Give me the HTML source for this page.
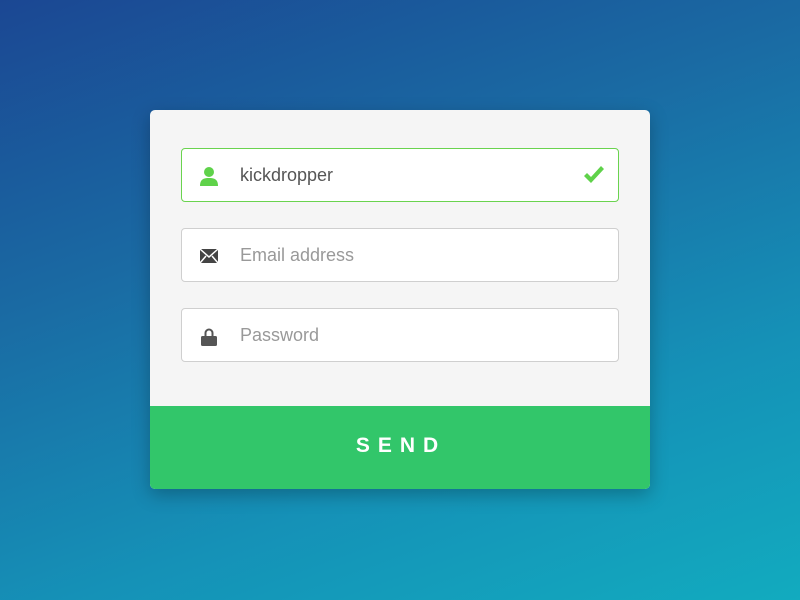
<!DOCTYPE html>
<html><head><style>
body{margin:0;width:800px;height:600px;overflow:hidden;background:linear-gradient(160deg,#1b4793 0%,#1a6aa3 35%,#1591b7 70%,#12abbf 100%);font-family:"Liberation Sans",sans-serif;position:relative}
.card{position:absolute;left:150px;top:110px;width:500px;height:379px;background:#f5f5f5;border-radius:5px;overflow:hidden;box-shadow:0 6px 18px rgba(0,0,0,.25)}
.in{position:absolute;left:31px;width:436px;height:52px;background:#fff;border:1px solid #cfcfcf;border-radius:4px}
.in span{position:absolute;left:58px;top:16px;font-size:18px;color:#999}
.ic{position:absolute;left:16px;top:16px}
.btn{position:absolute;left:0;top:296px;width:500px;height:83px;background:#32c66a;color:#fff;font-size:21px;font-weight:bold;letter-spacing:8px;text-align:center;line-height:80px;padding-left:2px;box-sizing:border-box}
</style></head><body>
<div class="card">
<div class="in" style="top:38px;border-color:#6ad34f"><svg class="ic" width="22" height="22" viewBox="0 0 22 22"><circle cx="11" cy="7" r="5" fill="#5fd24a"/><path d="M2 21 C2 14 6 13 11 13 C16 13 20 14 20 21Z" fill="#5fd24a"/></svg><span style="color:#555">kickdropper</span><svg style="position:absolute;right:12px;top:16px" width="24" height="20" viewBox="0 0 24 20"><path d="M2 11 L9 18 L22 4 L19 1 L9 12 L5 8Z" fill="#5fd24a"/></svg></div>
<div class="in" style="top:118px"><svg class="ic" width="22" height="22" viewBox="0 0 22 22"><rect x="2" y="4" width="18" height="14" fill="#444"/><path d="M2 4 L11 12 L20 4 M2 18 L8 11 M20 18 L14 11" stroke="#fff" stroke-width="1.5" fill="none"/></svg><span>Email address</span></div>
<div class="in" style="top:198px"><svg class="ic" width="22" height="22" viewBox="0 0 22 22"><path d="M7.5 11 V8 a3.5 3.5 0 0 1 7 0 V11" stroke="#555" stroke-width="2" fill="none"/><rect x="3" y="11" width="16" height="10" rx="1.5" fill="#555"/></svg><span>Password</span></div>
<div class="btn">SEND</div>
</div>
</body></html>
